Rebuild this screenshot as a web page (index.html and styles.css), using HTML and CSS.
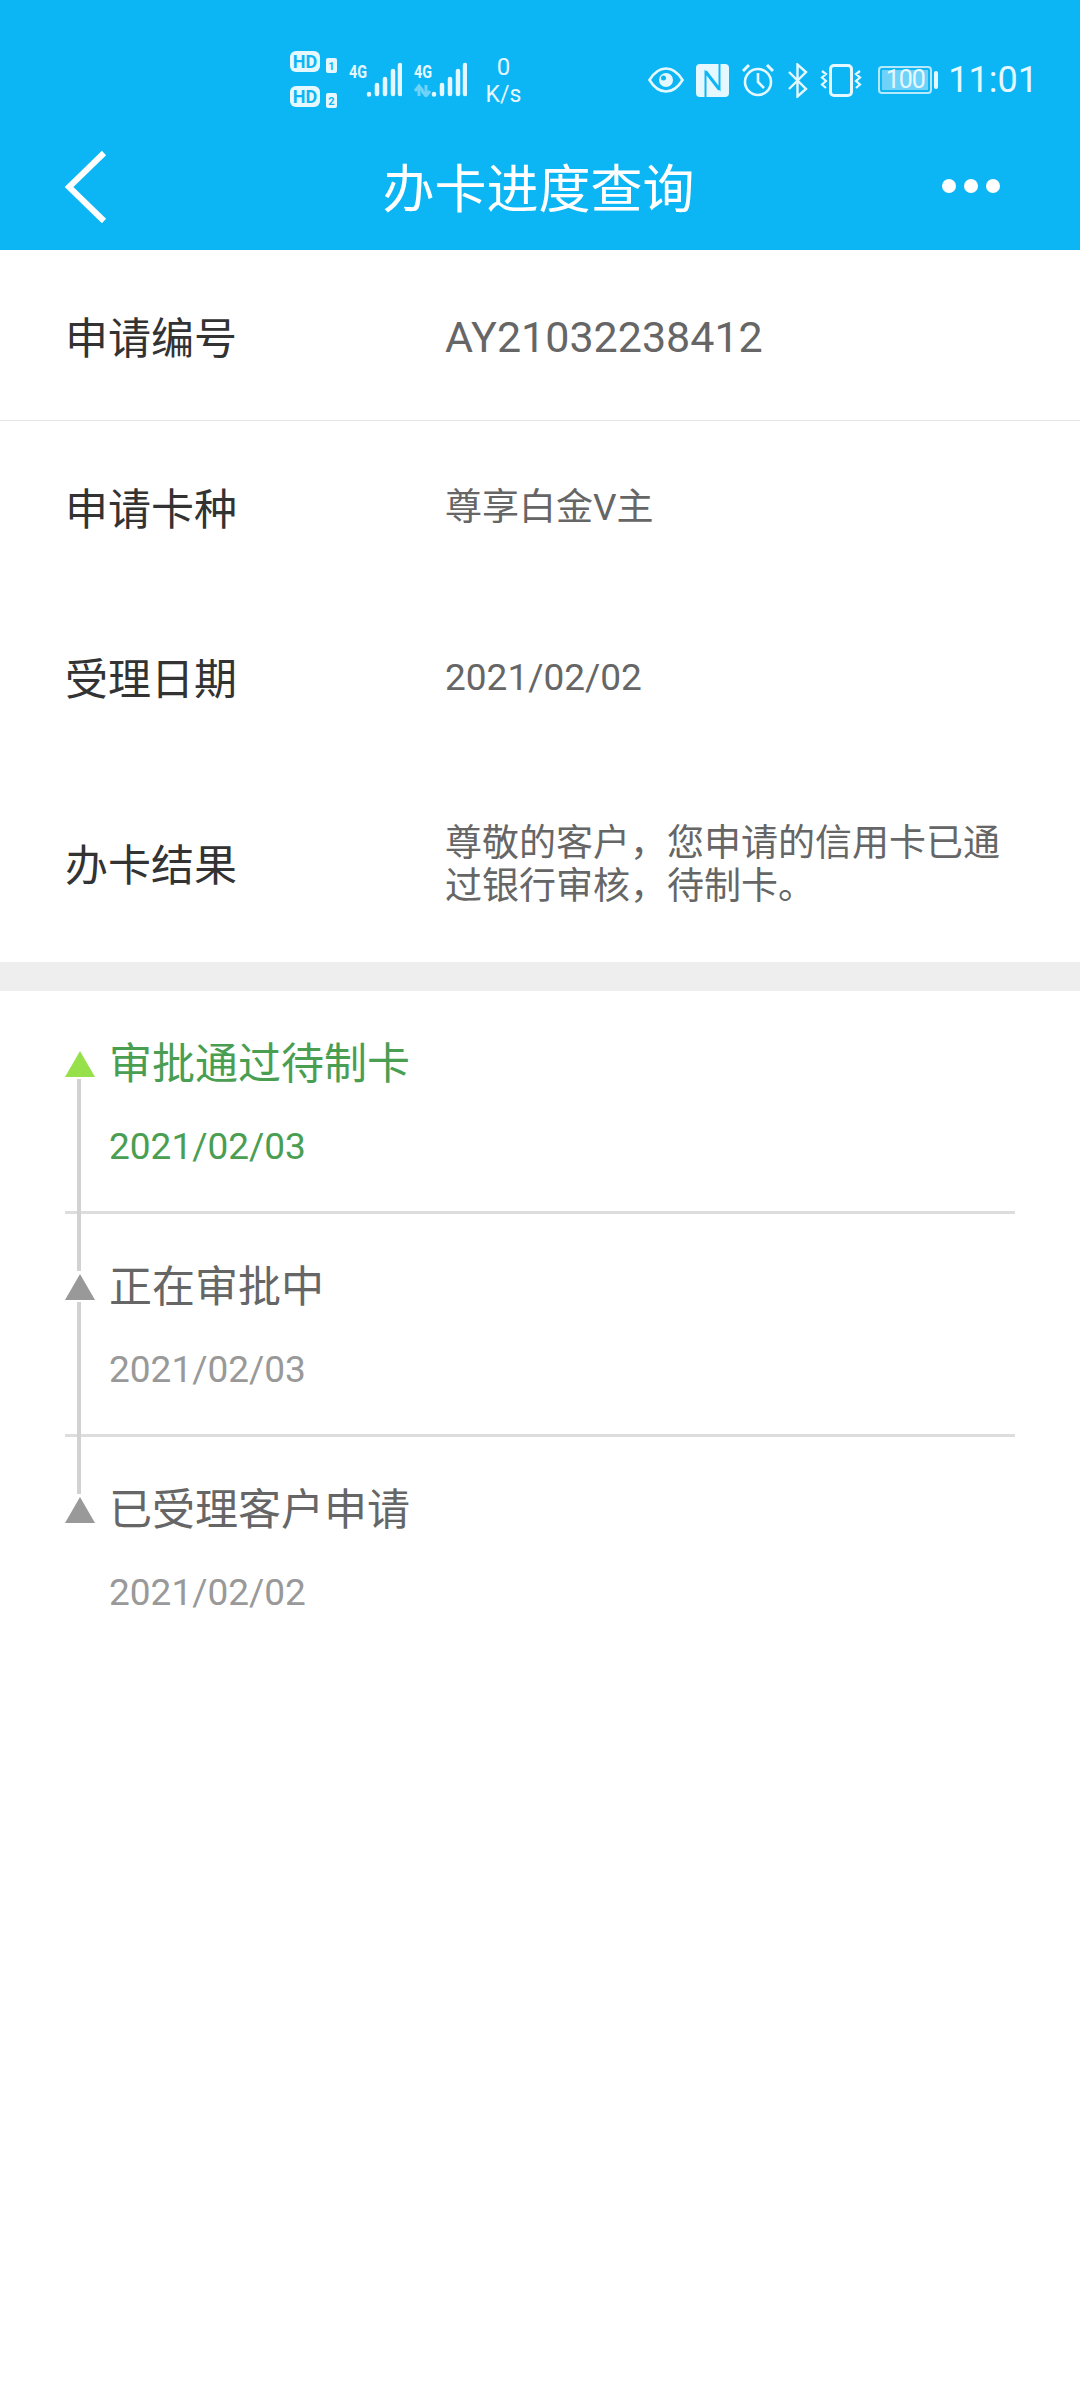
FILE: index.html
```html
<!DOCTYPE html>
<html lang="en">
<head>
    <meta charset="UTF-8">
    <meta name="viewport" content="width=device-width, initial-scale=1.0">
    <title>办卡进度查询</title>
    <link rel="stylesheet" href="styles.css">
</head>
<body>
    <header class="top">
        <div class="status">
            <svg class="sims" width="47" height="58" viewBox="0 0 47 58">
                <rect x="0" y="0" width="30" height="21" rx="6" fill="#e6f8ff"/>
                <text x="15" y="16.500" class="hd">HD</text>
                <rect x="36" y="7" width="11" height="15" rx="2" fill="#e6f8ff"/>
                <text x="41.500" y="19" class="simno">1</text>
                <rect x="0" y="35" width="30" height="21" rx="6" fill="#e6f8ff"/>
                <text x="15" y="51.500" class="hd">HD</text>
                <rect x="36" y="42" width="11" height="15" rx="2" fill="#e6f8ff"/>
                <text x="41.500" y="54" class="simno">2</text>
            </svg>
            <svg class="signal" width="53" height="42" viewBox="0 -8 53 42">
                <text x="0" y="15" class="net" textLength="18" lengthAdjust="spacingAndGlyphs">4G</text>
                <g stroke="#e6f8ff" stroke-width="4.500" stroke-linecap="round">
                    <path d="M20 31v.5M28 22v9M36 16v15M44 8v23M51 2v29"/>
                </g>
            </svg>
            <svg class="signal" width="53" height="42" viewBox="0 -8 53 42">
                <text x="0" y="15" class="net" textLength="18" lengthAdjust="spacingAndGlyphs">4G</text>
                <path d="M5 33V24M1 28l4-5 4 5M12 22v9M8 28l4 5 4-5" fill="none" stroke="#6ed2f9" stroke-width="3"/>
                <g stroke="#e6f8ff" stroke-width="4.500" stroke-linecap="round">
                    <path d="M20 31v.5M28 22v9M36 16v15M44 8v23M51 2v29"/>
                </g>
            </svg>
            <div class="speed"><span>0</span><span class="unit">K/s</span></div>
            <div class="status-right">
                <svg width="36" height="26" viewBox="0 0 36 26">
                    <path d="M1.500 13C6 5.500 11.500 1.500 18 1.500S30 5.500 34.500 13C30 20.500 24.500 24.500 18 24.500S6 20.500 1.500 13Z" fill="none" stroke="#e6f8ff" stroke-width="2.600"/>
                    <circle cx="18" cy="13" r="7" fill="#e6f8ff"/>
                    <circle cx="15.500" cy="11" r="2.500" fill="#0cb6f4"/>
                </svg>
                <svg width="33" height="33" viewBox="0 0 33 33">
                    <rect width="33" height="33" rx="4" fill="#e6f8ff"/>
                    <path d="M9.500 33V8.500L23 26M23.500 0V24.500L10 7" fill="none" stroke="#0cb6f4" stroke-width="2"/>
                </svg>
                <svg width="34" height="34" viewBox="0 0 34 34">
                    <circle cx="17" cy="19" r="13" fill="none" stroke="#e6f8ff" stroke-width="2.600"/>
                    <path d="M17 10v9l6 6" fill="none" stroke="#e6f8ff" stroke-width="2.600"/>
                    <path d="M2 8l6-6M32 8l-6-6" fill="none" stroke="#e6f8ff" stroke-width="3"/>
                </svg>
                <svg width="21" height="35" viewBox="0 0 21 35">
                    <path d="M2 9l17 17-8.500 7.500V1.500L19 9 2 26" fill="none" stroke="#e6f8ff" stroke-width="2.400"/>
                </svg>
                <svg width="42" height="33" viewBox="0 0 42 33">
                    <rect x="10.500" y="1.500" width="21" height="30" rx="3.500" fill="none" stroke="#e6f8ff" stroke-width="3"/>
                    <path d="M2 7l4 3-4 3.500 4 3.500-4 3.500 4 3.500M40 7l-4 3 4 3.500-4 3.500 4 3.500-4 3.500" fill="none" stroke="#e6f8ff" stroke-width="2.200"/>
                </svg>
                <div class="battery">
                    <div class="battery-body"><span class="battery-level">100</span></div>
                    <div class="battery-tip"></div>
                </div>
                <span class="clock">11:01</span>
            </div>
        </div>
        <nav class="nav">
            <svg class="back" width="44" height="74" viewBox="0 0 44 74">
                <path d="M40 3L5 37l35 34" fill="none" stroke="#fff" stroke-width="6"/>
            </svg>
            <h1>办卡进度查询</h1>
            <div class="more"><i></i><i></i><i></i></div>
        </nav>
    </header>

    <section class="info">
        <div class="row row-first">
            <span class="label">申请编号</span>
            <span class="value value-big">AY21032238412</span>
        </div>
        <div class="row">
            <span class="label">申请卡种</span>
            <span class="value">尊享白金V主</span>
        </div>
        <div class="row">
            <span class="label">受理日期</span>
            <span class="value">2021/02/02</span>
        </div>
        <div class="row row-result">
            <span class="label">办卡结果</span>
            <span class="value">尊敬的客户，您申请的信用卡已通过银行审核，待制卡。</span>
        </div>
    </section>

    <section class="steps">
        <div class="step step-active">
            <div class="step-title">审批通过待制卡</div>
            <div class="step-date">2021/02/03</div>
        </div>
        <div class="step">
            <div class="step-title">正在审批中</div>
            <div class="step-date">2021/02/03</div>
        </div>
        <div class="step step-last">
            <div class="step-title">已受理客户申请</div>
            <div class="step-date">2021/02/02</div>
        </div>
    </section>
</body>
</html>
```

FILE: styles.css
```css
* {
    box-sizing: border-box;
}
body {
    margin: 0;
    background-color: #fff;
    font-family: Roboto, "Noto Sans CJK SC", sans-serif;
    color: #333;
}
.top {
    height: 250px;
    background-color: #0cb6f4;
    color: #fff;
}
.status {
    height: 125px;
    padding: 30px 42px 0 290px;
    display: flex;
    align-items: flex-start;
    color: #e6f8ff;
}
.status svg {
    display: block;
    flex: none;
}
.sims {
    margin-top: 21px;
}
.hd {
    font: 700 18px Roboto, sans-serif;
    text-anchor: middle;
    fill: #0cb6f4;
}
.simno {
    font: 700 11px Roboto, sans-serif;
    text-anchor: middle;
    fill: #0cb6f4;
}
.net {
    font: 700 19px Roboto, sans-serif;
    fill: #e6f8ff;
}
.signal {
    margin: 25px 0 0 12px;
}
.speed {
    margin: 24px 0 0 18px;
    width: 37px;
    display: flex;
    flex-direction: column;
    align-items: center;
    font-size: 24px;
    line-height: 27px;
}
.speed .unit {
    font-size: 23px;
}
.status-right {
    margin: 32px 0 0 auto;
    display: flex;
    align-items: center;
    gap: 12px;
    height: 36px;
}
.battery {
    display: flex;
    align-items: center;
    gap: 2px;
    margin-left: 4px;
}
.battery-body {
    width: 54px;
    height: 28px;
    border: 2px solid #b5e8fb;
    border-radius: 4px;
    padding: 2px;
}
.battery-level {
    display: block;
    height: 20px;
    background-color: #6ed2f9;
    font-size: 25px;
    letter-spacing: -1px;
    line-height: 20px;
    text-align: center;
    color: #e6f8ff;
}
.battery-tip {
    width: 4px;
    height: 18px;
    background-color: #e6f8ff;
    border-radius: 2px;
}
.clock {
    font-size: 36px;
    margin-left: -2px;
}
.nav {
    height: 125px;
    position: relative;
    display: flex;
    align-items: center;
    justify-content: center;
}
.back {
    position: absolute;
    left: 64px;
    top: 25px;
}
.nav h1 {
    margin: -4px 0 0 -3px;
    font-size: 52px;
    font-weight: 400;
}
.more {
    position: absolute;
    left: 942px;
    top: 54px;
    display: flex;
    gap: 8px;
}
.more i {
    width: 14px;
    height: 14px;
    border-radius: 50%;
    background-color: #fff;
}
.info {
    border-bottom: 29px solid #eee;
}
.row {
    height: 170px;
    padding: 0 60px 0 65px;
    display: flex;
    align-items: center;
}
.row-first {
    height: 171px;
    border-bottom: 1px solid #e5e5e5;
}
.row-result {
    height: 201px;
}
.label {
    flex: none;
    width: 380px;
    font-size: 43px;
}
.value {
    padding-top: 3px;
    font-size: 37px;
    line-height: 44px;
    color: #666;
}
.value-big {
    font-size: 43px;
}
.row-result .value {
    padding-top: 7px;
    line-height: 43px;
}
.step {
    position: relative;
    height: 223px;
    margin: 0 65px;
    padding: 47px 0 0 44px;
    border-bottom: 3px solid #ddd;
}
.step::before {
    content: "";
    position: absolute;
    left: 0;
    top: 60px;
    border-left: 15px solid transparent;
    border-right: 15px solid transparent;
    border-bottom: 26px solid #999;
}
.step::after {
    content: "";
    position: absolute;
    left: 12px;
    top: 88px;
    width: 4px;
    height: 192px;
    background-color: #d2d2d2;
}
.step-active::before {
    border-bottom-color: #96e04c;
}
.step-last {
    border-bottom: none;
}
.step-last::after {
    display: none;
}
.step-title {
    font-size: 43px;
    line-height: 52px;
    color: #666;
}
.step-date {
    margin-top: 35px;
    font-size: 37px;
    line-height: 44px;
    color: #999;
}
.step-active .step-title,
.step-active .step-date {
    color: #4a9e52;
}
```
